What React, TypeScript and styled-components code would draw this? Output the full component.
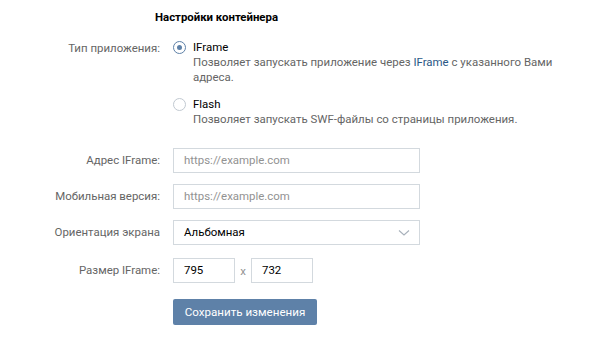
import React from "react";
import styled, { createGlobalStyle } from "styled-components";

const Global = createGlobalStyle`
  html, body { margin: 0; padding: 0; background: #fff; }
  body { font-family: Roboto, "Open Sans", "Noto Sans", sans-serif; font-size: 11.45px; color: #000; }
  * { box-sizing: border-box; }
`;

const Page = styled.div`
  width: 600px;
  height: 342px;
  padding-top: 9px;
`;

const Title = styled.div`
  margin-left: 155px;
  font-weight: 700;
  font-size: 11.4px;
  line-height: 16px;
  color: #000;
`;

const Form = styled.div`
  display: grid;
  grid-template-columns: 160px 1fr;
  column-gap: 13px;
  margin-top: 14px;
`;

const Label = styled.div<{ $top?: number }>`
  text-align: right;
  color: #656565;
  line-height: 16px;
  padding-top: ${(p) => p.$top ?? 0}px;
`;

const Field = styled.div<{ $mb?: number }>`
  margin-bottom: ${(p) => p.$mb ?? 0}px;
`;

const RadioOption = styled.div<{ $mb?: number }>`
  display: flex;
  gap: 7px;
  margin-bottom: ${(p) => p.$mb ?? 0}px;
`;

const RadioCircle = styled.span<{ $checked?: boolean }>`
  flex: none;
  width: 13px;
  height: 13px;
  margin-top: 2px;
  border-radius: 50%;
  border: 1px solid ${(p) => (p.$checked ? "#5e81a8" : "#c1c9d1")};
  display: flex;
  align-items: center;
  justify-content: center;
  &::after {
    content: "";
    display: ${(p) => (p.$checked ? "block" : "none")};
    width: 5px;
    height: 5px;
    border-radius: 50%;
    background: #5e81a8;
  }
`;

const RadioText = styled.div`
  display: flex;
  flex-direction: column;
`;

const RadioTitle = styled.div`
  color: #000;
  line-height: 16px;
`;

const RadioDesc = styled.div`
  color: #656565;
  line-height: 15px;
  width: 368px;
`;

const Link = styled.span`
  color: #2a5885;
`;

const TextInput = styled.div<{ $w?: number; $ph?: boolean }>`
  width: ${(p) => p.$w ?? 247}px;
  height: 25px;
  border: 1px solid #d3d9de;
  padding: 0 10px;
  line-height: 23px;
  color: ${(p) => (p.$ph ? "#929292" : "#000")};
  background: #fff;
`;

const Select = styled.div`
  width: 247px;
  height: 25px;
  border: 1px solid #d3d9de;
  padding: 0 9px 0 10px;
  line-height: 23px;
  color: #000;
  display: flex;
  justify-content: space-between;
  align-items: center;
`;

const SizeRow = styled.div`
  display: flex;
  align-items: center;
`;

const Times = styled.span`
  color: #929292;
  width: 16px;
  text-align: center;
`;

const Button = styled.button`
  font-family: inherit;
  font-size: 11.6px;
  color: #fff;
  background: #5e81a8;
  border: none;
  border-radius: 2px;
  height: 26px;
  width: 144px;
  padding: 0;
  margin-top: 16px;
  text-align: center;
`;

const Chevron = () => (
  <svg width="12" height="8" viewBox="0 0 12 8">
    <path d="M1 1.5 L6 6 L11 1.5" fill="none" stroke="#a8b1bb" strokeWidth="1.1" />
  </svg>
);

export default function App() {
  return (
    <Page>
      <Global />
      <Title>Настройки контейнера</Title>
      <Form>
        <Label $top={1}>Тип приложения:</Label>
        <Field $mb={21}>
          <RadioOption $mb={11}>
            <RadioCircle $checked />
            <RadioText>
              <RadioTitle>IFrame</RadioTitle>
              <RadioDesc>
                Позволяет запускать приложение через <Link>IFrame</Link> с указанного Вами адреса.
              </RadioDesc>
            </RadioText>
          </RadioOption>
          <RadioOption>
            <RadioCircle />
            <RadioText>
              <RadioTitle>Flash</RadioTitle>
              <RadioDesc>Позволяет запускать SWF-файлы со страницы приложения.</RadioDesc>
            </RadioText>
          </RadioOption>
        </Field>

        <Label $top={4}>Адрес IFrame:</Label>
        <Field $mb={11}>
          <TextInput $ph>https://example.com</TextInput>
        </Field>

        <Label $top={4}>Мобильная версия:</Label>
        <Field $mb={11}>
          <TextInput $ph>https://example.com</TextInput>
        </Field>

        <Label $top={4}>Ориентация экрана</Label>
        <Field $mb={13}>
          <Select>
            <span>Альбомная</span>
            <Chevron />
          </Select>
        </Field>

        <Label $top={4}>Размер IFrame:</Label>
        <Field>
          <SizeRow>
            <TextInput $w={62}>795</TextInput>
            <Times>x</Times>
            <TextInput $w={62}>732</TextInput>
          </SizeRow>
          <Button>Сохранить изменения</Button>
        </Field>
      </Form>
    </Page>
  );
}
